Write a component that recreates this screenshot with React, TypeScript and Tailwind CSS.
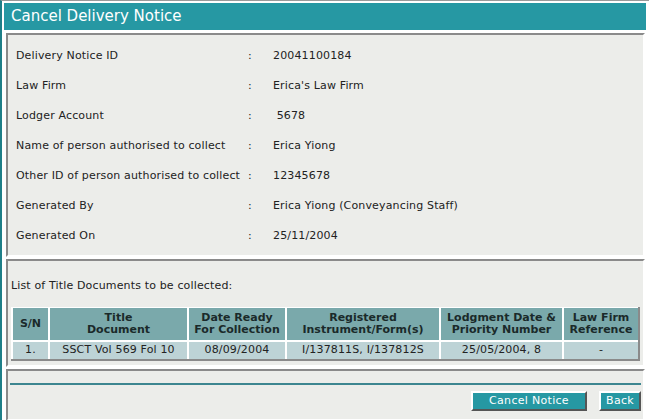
const FIELDS: [string, string][] = [
  ["Delivery Notice ID", "20041100184"],
  ["Law Firm", "Erica's Law Firm"],
  ["Lodger Account", " 5678"],
  ["Name of person authorised to collect", "Erica Yiong"],
  ["Other ID of person authorised to collect", "12345678"],
  ["Generated By", "Erica Yiong (Conveyancing Staff)"],
  ["Generated On", "25/11/2004"],
];

const COLS = [
  { w: "w-[37px]", head: ["S/N"], val: "1." },
  { w: "w-[139px]", head: ["Title", "Document"], val: "SSCT Vol 569 Fol 10" },
  { w: "w-[98px]", head: ["Date Ready", "For Collection"], val: "08/09/2004" },
  { w: "w-[154px]", head: ["Registered", "Instrument/Form(s)"], val: "I/137811S, I/137812S" },
  { w: "w-[123px]", head: ["Lodgment Date &", "Priority Number"], val: "25/05/2004, 8" },
  { w: "w-[76px]", head: ["Law Firm", "Reference"], val: "-" },
];

const panel =
  "mx-[4px] bg-[#ecedea] border-2 border-t-[#8a8a8a] border-l-[#8a8a8a] border-b-white border-r-white";

const btn =
  "h-[20px] border-2 border-t-white border-l-white border-b-[#555] border-r-[#555] bg-[#2698a3] text-[11px] tracking-[0.3px] text-white";

export default function App() {
  return (
    <div className="h-[420px] w-[649px] overflow-hidden border-l-2 border-l-[#1f7f88] border-t border-t-[#9a9a9a] bg-white pt-[2px] font-['DejaVu_Sans',sans-serif] text-[11px] tracking-[0.15px] text-[#222]">
      <div className="mx-[2px] mr-[3px] flex h-[27px] items-center bg-[#2698a3] pl-[7px] text-[15px] tracking-normal text-white">
        Cancel Delivery Notice
      </div>
      <div className={`${panel} mt-[3px] h-[224px] pt-[6px]`}>
        {FIELDS.map(([k, v]) => (
          <div key={k} className="flex h-[30px] items-center">
            <div className="w-[240px] pl-[8px]">{k}</div>
            <div className="w-[25px]">:</div>
            <div className="whitespace-pre">{v}</div>
          </div>
        ))}
      </div>
      <div className={`${panel} mt-[2px] h-[108px] pl-[3px]`}>
        <div className="mt-[17px]">List of Title Documents to be collected:</div>
        <div className="mt-[12px] inline-block border-r-2 border-b-2 border-r-[#8a8a8a] border-b-[#8a8a8a]">
          <div className="flex">
            {COLS.map((c) => (
              <div
                key={c.val}
                className={`${c.w} flex h-[33px] flex-col items-center justify-center border-t border-l-2 border-white bg-[#7aa9ab] font-bold leading-[12px] tracking-normal text-[#1a2a2a]`}
              >
                {c.head.map((h) => (
                  <div key={h}>{h}</div>
                ))}
              </div>
            ))}
          </div>
          <div className="flex">
            {COLS.map((c) => (
              <div
                key={c.val}
                className={`${c.w} flex h-[19px] items-center justify-center border-t-2 border-l-2 border-white bg-[#bdd3d6]`}
              >
                {c.val}
              </div>
            ))}
          </div>
        </div>
      </div>
      <div className={`${panel} mt-[2px] h-[52px] px-[2px]`}>
        <div className="mt-[12px] h-[2px] w-[631px] bg-[#3d8690]" />
        <div className="mt-[6px] flex justify-end gap-[12px]">
          <button className={`${btn} w-[116px]`}>Cancel Notice</button>
          <button className={`${btn} w-[42px]`}>Back</button>
        </div>
      </div>
    </div>
  );
}
